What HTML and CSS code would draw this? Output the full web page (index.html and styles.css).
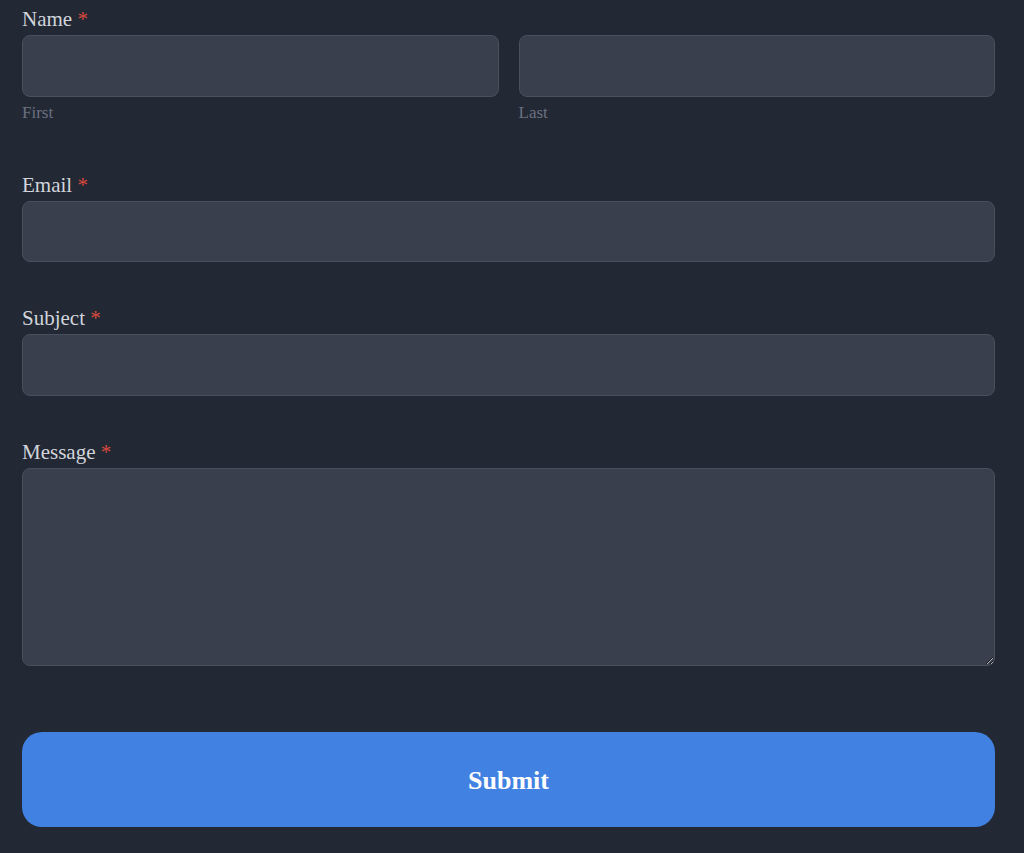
FILE: index.html
```html
<!DOCTYPE html>
<html>
<head>
<meta charset="utf-8">
<link rel="stylesheet" href="styles.css">
</head>
<body>
<form class="form">
  <div class="field field-name">
    <label class="label">Name <span class="req">*</span></label>
    <div class="name-row">
      <div class="sub">
        <input class="input" type="text">
        <span class="sublabel">First</span>
      </div>
      <div class="sub">
        <input class="input" type="text">
        <span class="sublabel">Last</span>
      </div>
    </div>
  </div>
  <div class="field">
    <label class="label">Email <span class="req">*</span></label>
    <input class="input" type="email">
  </div>
  <div class="field">
    <label class="label">Subject <span class="req">*</span></label>
    <input class="input" type="text">
  </div>
  <div class="field field-last">
    <label class="label">Message <span class="req">*</span></label>
    <textarea class="input textarea"></textarea>
  </div>
  <button class="submit" type="button">Submit</button>
</form>
</body>
</html>
```
FILE: styles.css
```css
html, body {
  margin: 0;
  padding: 0;
  background: #222834;
}
body {
  font-family: "Liberation Serif", "Times New Roman", serif;
  color: #d1d5db;
}
.form {
  display: flex;
  flex-direction: column;
  padding: 8px 29px 0 22px;
}
.field {
  display: flex;
  flex-direction: column;
  margin-bottom: 45px;
}
.field-name {
  margin-bottom: 52px;
}
.label {
  font-size: 21px;
  line-height: 23px;
  margin-bottom: 4px;
  color: #d1d5db;
}
.req {
  color: #d94a3d;
}
.name-row {
  display: flex;
  gap: 20px;
}
.sub {
  flex: 1;
  display: flex;
  flex-direction: column;
}
.sublabel {
  font-size: 17px;
  line-height: 19px;
  margin-top: 6px;
  color: #6b7080;
}
.input {
  box-sizing: border-box;
  height: 61.5px;
  width: 100%;
  background: #3a3f4e;
  border: 1px solid #4a4f5e;
  border-radius: 8px;
  outline: none;
  color: #d1d5db;
  font: inherit;
  margin: 0;
}
.textarea {
  height: 198.5px;
  display: block;
  resize: vertical;
}
.field-last {
  margin-bottom: 65.5px;
}
.submit {
  box-sizing: border-box;
  height: 95.5px;
  width: 100%;
  padding: 4px 0 0;
  border: none;
  border-radius: 20px;
  background: #4181e1;
  color: #ffffff;
  font-family: "Liberation Serif", "Times New Roman", serif;
  font-weight: bold;
  font-size: 26px;
}
```
